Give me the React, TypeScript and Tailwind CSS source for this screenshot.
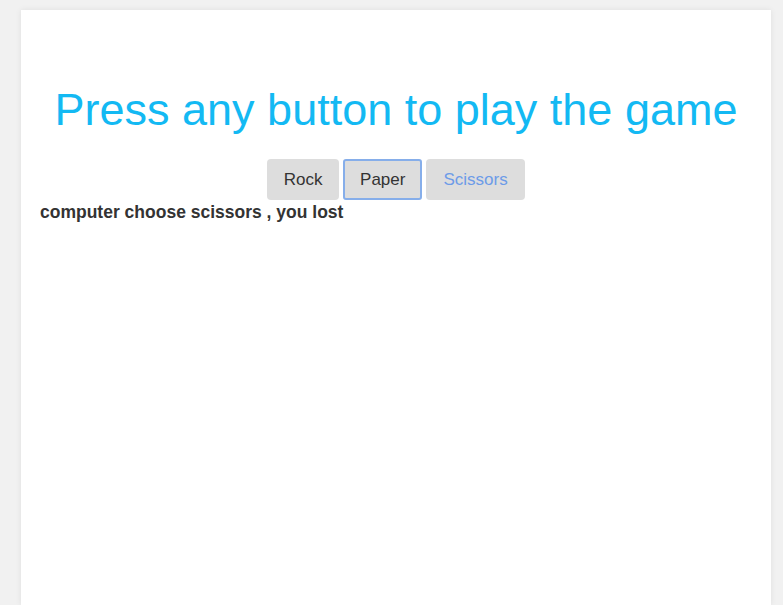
import React from "react";

export default function App() {
  return (
    <div className="min-h-[605px] bg-[#f1f1f1] pl-[21px] pr-[12px] pt-[10px] pb-0 flex" style={{ fontFamily: '"Liberation Sans", Arial, sans-serif' }}>
      <div className="flex-1 bg-white shadow-[0_0_6px_rgba(0,0,0,0.08)] px-[19px] pt-[74px] min-h-[595px]">
        <h1 className="text-center text-[45px] leading-[52px] text-[#13b9f3] font-normal whitespace-nowrap">Press any button to play the game</h1>
        <div className="flex justify-center gap-[4px] mt-[23px]">
          <button className="h-[41px] px-[15.5px] rounded-[4px] bg-[#dddddd] text-[17px] text-[#333] border border-transparent">Rock</button>
          <button className="h-[41px] px-[15px] rounded-[3px] bg-[#dddddd] text-[17px] text-[#333] border-2 border-[#86aeea]">Paper</button>
          <button className="h-[41px] px-[16px] rounded-[4px] bg-[#dddddd] text-[17px] text-[#6c9be8] border border-transparent">Scissors</button>
        </div>
        <p className="mt-[2px] text-[17.5px] font-bold text-[#333] leading-[21px]">computer choose scissors , you lost</p>
      </div>
    </div>
  );
}
